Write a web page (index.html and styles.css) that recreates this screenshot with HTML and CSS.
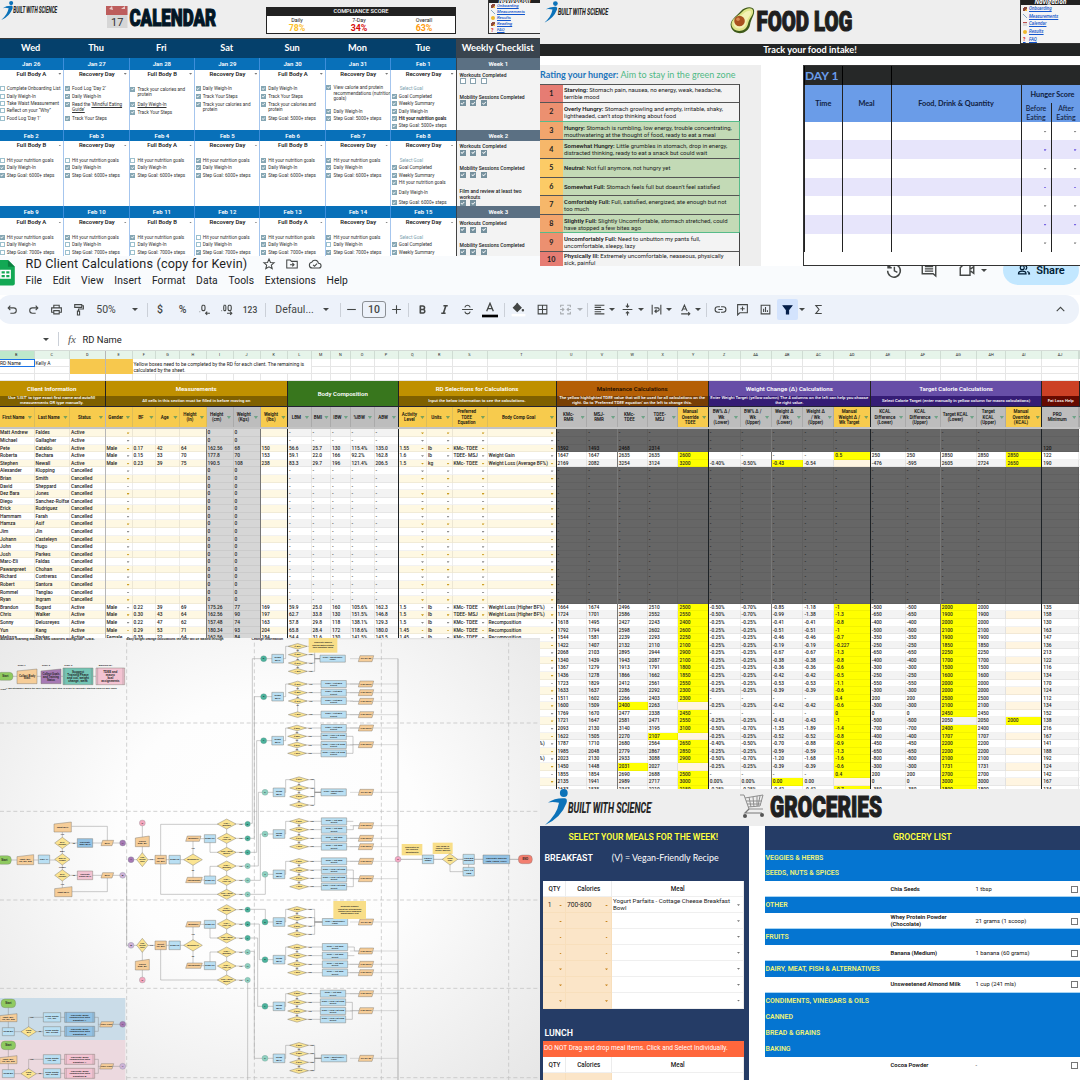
FILE: index.html
```html
<!DOCTYPE html>
<html lang="en">
<head>
<meta charset="utf-8">
<title>Built With Science</title>
<link rel="stylesheet" href="styles.css">
</head>
<body>
<svg class="defs" width="0" height="0">
  <symbol id="logo" viewBox="0 0 109 36">
    <circle cx="18.8" cy="4" r="3.9" fill="#0b72b9"/>
    <path d="M3 13.5Q10 8.600 20 9.200Q22.800 9.800 21.500 14Q16 29 0 36Q12 26 14 13.800Q8 12.300 3 13.500Z" fill="#0b72b9"/>
    <text x="23" y="23.500" class="logo-text" textLength="83" lengthAdjust="spacingAndGlyphs">BUILT WITH SCIENCE</text>
    <text x="105.800" y="16" font-size="3.500">™</text>
  </symbol>
</svg>
<main class="collage">
  <section class="calendar">
    <header class="cal-top">
      <svg class="logo-sm"><use href="#logo"/></svg>
      <svg class="cal-title" viewBox="0 0 112 24">
        <rect x="1" y="0" width="20.500" height="22" fill="#d6d6d6"/>
        <path d="M0 0h21.500v9H0z" fill="#bd5d5c"/>
        <path d="M3 3l3-3 1 4zM15 3l4-3v3z" fill="#e9c9c8"/>
        <text x="11.200" y="19.500" class="date-num">17</text>
        <text x="23.500" y="20" class="poster" font-size="24" fill="#031625" stroke="#031625" textLength="86.500" lengthAdjust="spacingAndGlyphs">CALENDAR</text>
      </svg>
      <div class="score">
        <div class="score-head">COMPLIANCE SCORE</div>
        <div class="score-row">
          <div>Daily<b class="c-y">78%</b></div>
          <div>7-Day<b class="c-r">34%</b></div>
          <div>Overall<b class="c-o">63%</b></div>
        </div>
      </div>
      <nav class="nav nav-cal"><h4>Navigation</h4><a><i class="rocket"></i>Onboarding</a><a><i class="tool"></i>Measurements</a><a><i class="medal"></i>Results</a><a><i class="rocket"></i>Reading</a><a><i class="q">?</i>FAQ</a></nav>
    </header>
    <div class="cal-grid" id="cal"></div>
  </section>

  <section class="sheet">
    <header class="s-title">
      <svg class="s-logo" viewBox="0 0 20 26"><path d="M0 2Q0 0 2 0H13L20 7V24Q20 26 18 26H2Q0 26 0 24Z" fill="#12a854"/><path d="M13 0L20 7H13Z" fill="#0b8040"/><path d="M5 10h11v9H5zM6.500 11.500v2.300h3.300v-2.300zm4.800 0v2.300h3.200v-2.300zM6.500 15.200v2.300h3.300v-2.300zm4.800 0v2.300h3.200v-2.300z" fill="#fff" fill-rule="evenodd"/></svg>
      <div class="s-names">
        <div class="s-doc"><span>RD Client Calculations (copy for Kevin)</span>
          <svg class="ic" viewBox="0 0 24 24"><path d="M12 3.500l2.500 5.800 6.300.5-4.800 4.100 1.500 6.200L12 16.800l-5.500 3.300L8 13.900 3.200 9.800l6.300-.5z"/></svg>
          <svg class="ic" viewBox="0 0 24 24"><path d="M3 19V5h6l2 2.500h10V19zM8.500 13.200H15M12.500 10.200l3 3-3 3"/></svg>
          <svg class="ic" viewBox="0 0 24 24"><path d="M7 19a5 5 0 0 1-.6-9.900 6 6 0 0 1 11.400 1.500A4.200 4.200 0 0 1 18.500 19zM8.700 13.500l2.500 2.300 4.300-4.300"/></svg>
        </div>
        <div class="s-menu"><span>File</span><span>Edit</span><span>View</span><span>Insert</span><span>Format</span><span>Data</span><span>Tools</span><span>Extensions</span><span>Help</span></div>
      </div>
      <div class="s-right">
        <svg class="big" viewBox="0 0 24 24"><path d="M4 4v5h5M4.500 9A8.500 8.500 0 1 1 3.500 13M12.500 7.500V13l4 2.300"/></svg>
        <svg class="big" viewBox="0 0 24 24"><path d="M3 4h18v16l-3.500-3H3zM6.500 7.500h11M6.500 10.500h11M6.500 13.500h11"/></svg>
        <svg class="big" viewBox="0 0 24 24"><path d="M3 9l4-4h9v14H3zM17 10.500l4-3v9l-4-3"/></svg>
        <i class="tri"></i>
        <div class="share"><svg viewBox="0 0 24 24"><circle cx="9" cy="8" r="3.400"/><path d="M2.500 18.500q0-4.500 6.500-4.500t6.500 4.500zM14.500 5a3.300 3.300 0 0 1 0 6.300M17.500 14.500q4 1 4 4H19"/></svg>Share</div>
      </div>
    </header>
    <div class="toolbar" id="toolbar"></div>
    <div class="formula"><span class="ref">1</span><i class="tri"></i><i class="sep"></i><em>fx</em><span>RD Name</span></div>
    <div class="cols letters" id="letters"></div>
    <div class="cols intro" id="intro"></div>
    <div class="cols groups">
      <div class="g gold" style="grid-column:1/4">Client Information<small>Use ‘LIST’ to type exact first name and autofill measurements OR type manually.</small></div>
      <div class="g gold" style="grid-column:4/11">Measurements<small>All cells in this section must be filled in before moving on</small></div>
      <div class="g green" style="grid-column:11/16">Body Composition</div>
      <div class="g gold" style="grid-column:16/20">RD Selections for Calculations<small>Input the below information to see the calculations.</small></div>
      <div class="g orange" style="grid-column:20/25">Maintenance Calculations<small>The yellow highlighted TDEE value that will be used for all calculations on the right. Go to ‘Preferred TDEE equation’ on the left to change this.</small></div>
      <div class="g violet" style="grid-column:25/30">Weight Change (Δ) Calculations<small>Enter Weight Target (yellow column) The 4 columns on the left can help you choose the right value.</small></div>
      <div class="g violet" style="grid-column:30/35">Target Calorie Calculations<small>Select Calorie Target (enter manually in yellow column for macro calculations)</small></div>
      <div class="g red" style="grid-column:35/37"><small>Fat Loss Help</small></div>
    </div>
    <div class="cols heads" id="heads"></div>
    <div class="cols body" id="body"></div>
  </section>

  <section class="food">
    <header class="food-top">
      <svg class="logo-md"><use href="#logo"/></svg>
      <svg class="food-title" viewBox="0 0 124 28">
        <path d="M2 20C0 13 7 10 12 4C16-.5 24-1 25 3C26 8 22 11 21 18C19 28 5 29 2 20Z" fill="#3f5a1a"/>
        <path d="M2.500 18C2 12 8 10 13 5C17 1 23 0 24 3.500C25 8 20 11 19 17C17 26 4 26 2.500 18Z" fill="#dfe68a"/>
        <path d="M4.500 17C4 12 10 11 14 7C18 3 22 3 22 5C22 9 18 11 17 17C15 23 5.500 23 4.500 17Z" fill="#f3f2b4"/>
        <circle cx="10.500" cy="14" r="5.300" fill="#a9521f"/><circle cx="9" cy="12.200" r="1.800" fill="#d98a52"/>
        <text x="27.500" y="24" class="poster" font-size="28.500" fill="#1f1f1f" stroke="#1f1f1f" textLength="96" lengthAdjust="spacingAndGlyphs">FOOD LOG</text>
      </svg>
      <nav class="nav nav-food"><h4>Navigation</h4><a><i class="rocket"></i>Onboarding</a><a><i class="tool"></i>Measurements</a><a><i class="cal"></i>Calendar</a><a><i class="medal"></i>Results</a><a><i class="q">?</i>FAQ</a></nav>
    </header>
    <div class="banner">Track your food intake!</div>
    <div class="food-main">
      <div class="hunger">
        <h3><b>Rating your hunger:</b> Aim to stay in the green zone</h3>
        <div id="hunger"></div>
      </div>
      <div class="day" id="day"></div>
    </div>
  </section>

  <section class="flow" id="flow"></section>

  <section class="groc">
    <header class="groc-top">
      <svg class="logo-lg"><use href="#logo"/></svg>
      <svg class="groc-title" viewBox="0 0 144 28">
        <path d="M1 3h4l5 14h14M6 6l18-3-3 11-12 1M10 5l2 10M14 5l1 10M18 4v10M21 4l-2 10M7 9h16M8 12h14" fill="none" stroke="#8e8e8e" stroke-width="1"/>
        <path d="M10 17l-4 4h17" fill="none" stroke="#777" stroke-width="1.200"/>
        <circle cx="6" cy="24" r="2" fill="#555"/><circle cx="23" cy="23" r="2" fill="#555"/>
        <text x="31" y="24.500" class="poster" font-size="30" fill="#1f1f1f" stroke="#1f1f1f" textLength="112" lengthAdjust="spacingAndGlyphs">GROCERIES</text>
      </svg>
    </header>
    <div class="groc-main">
      <div class="meals">
        <h2>SELECT YOUR MEALS FOR THE WEEK!</h2>
        <div class="meal-h"><b>BREAKFAST</b><span>(V) = Vegan-Friendly Recipe</span></div>
        <div class="mt" id="breakfast"></div>
        <div class="lunch">LUNCH</div>
        <div class="warn">DO NOT Drag and drop meal items. Click and Select Individually.</div>
        <div class="mt" id="lunch"></div>
      </div>
      <div class="list"><h2>GROCERY LIST</h2><div id="list"></div></div>
    </div>
  </section>
</main>
<script src="app.js"></script>
</body>
</html>
```
FILE: styles.css
```css
*{box-sizing:border-box}
body{margin:0;background:#fff;font-family:Roboto,"Liberation Sans",sans-serif;color:#222}
h2,h3,h4{margin:0}
.defs{position:absolute}
.collage{width:1080px;height:1080px;overflow:hidden;display:grid;grid-template-columns:540px 540px;grid-template-rows:256px 10px 372px 151px 291px}
.collage>section{overflow:hidden;min-width:0;min-height:0}
.calendar{grid-area:1/1/2/2}
.sheet{grid-area:2/1/5/3}
.food{grid-area:1/2/3/3;z-index:1}
.flow{grid-area:4/1/6/2;z-index:1}
.groc{grid-area:5/2/6/3;z-index:1}
.logo-text{font:italic 700 15.5px Roboto,sans-serif;fill:#222;stroke:#222;stroke-width:.2}
.poster{font-family:Roboto,sans-serif;font-weight:900;stroke-width:1.2}
.date-num{font:11px Roboto,sans-serif;text-anchor:middle;fill:#333}

/* calendar */
.calendar{background:#fff;display:flex;flex-direction:column}
.cal-top{height:39px;flex:none;background:#eee;border-bottom:1px solid #3a3a3a;display:flex;align-items:flex-start}
.logo-sm{width:58px;height:19px;margin:1px 0 0 1px}
.cal-title{width:112px;height:24px;margin:6px 0 0 46.500px;overflow:visible}
.score{width:190px;height:27px;margin:7px 0 0 48.500px;background:#fff;border:1px solid #222;border-top:0}
.score-head{background:#222;color:#fff;font-weight:500;font-size:5.700px;line-height:8.500px;text-align:center;margin:0 -1px}
.score-row{display:grid;grid-template-columns:60px 64px 66px;text-align:center;font-size:5.400px;line-height:8px}
.score-row b{display:block;font-size:8.800px;line-height:9px}
.c-y{color:#fcc02c}.c-r{color:#d60b0b}.c-o{color:#ff9a0b}
.nav{background:#f4f4f4;border:1px solid #333;border-top:0;display:flex;flex-direction:column;overflow:hidden}
.nav h4{background:#222;color:#fff;text-align:center;font:italic 700 6.200px "Open Sans",sans-serif;line-height:4px;height:5px;flex:none}
.nav a{color:#1155cc;text-decoration:underline;font-style:italic;font-weight:500;display:flex;align-items:center}
.nav i{width:4px;height:4px;margin-right:2px;display:inline-block;font-style:normal;font-weight:900;line-height:4px}
.nav .rocket{background:linear-gradient(135deg,transparent 25%,#8c4a3e 25% 70%,#f2b23a 70%)}
.nav .tool{background:linear-gradient(45deg,transparent 42%,#88a6c0 42% 60%,transparent 60%)}
.nav .medal{background:#f0b92e;border-radius:50%}
.nav .cal{background:#d9d9d9;border-top:1.500px solid #c0504d}
.nav .q{color:#e0342c;font-size:5px}
.nav-cal{width:52px;height:34px;margin-left:32px;border-right:0}
.nav-cal h4{height:2.500px;line-height:1px}
.nav-cal a{font-size:4.300px;height:6.300px;padding-left:2px}
.cal-grid{display:grid;grid-template-columns:repeat(7,65.360px) 84.500px;grid-template-rows:19px 11.500px 60px 11.500px 65px 12px 38px;margin-left:-2px;width:542px}
.dow{background:#05406b;color:#fff;font:700 9.200px/17.500px Lato,sans-serif;text-align:center}
.dow.wk{background:#39444f;font-size:9.400px}
.date{background:#0870b9;color:#fff;font-weight:600;font-size:6px;line-height:11.500px;text-align:center;border-left:1px solid #3d8edb}
.date.wk{background:#5b7083;border-left:1px solid #37434e}
.cell{border-left:1px solid #a6c6ee;padding-left:.5px;overflow:hidden}
.cell h4{font-size:5.900px;line-height:8.400px;font-weight:600;text-align:center;display:flex;justify-content:center;height:15.500px;position:relative}
.cell h4::after{content:"";position:absolute;right:2px;top:3.500px;width:3px;height:1.700px;background:#777;clip-path:polygon(0 0,100% 0,50% 100%)}
.task{display:flex;align-items:center;font-size:4.650px;line-height:5.500px;color:#333;white-space:pre}
.task.multi{align-items:flex-start;padding-top:1.600px}
.task.tri3{align-items:flex-start}
.task.strong{font-weight:600;color:#111}
.task.goal{color:#7ba0ad;padding-left:8px}
.task u{text-decoration:underline}
.ck{width:5px;height:5px;border:.8px solid #9cc0cd;flex:none;margin-right:2.200px;background:#fff}
.ck.on{background:#85a6b3;border:0}
.ck.on::after{content:"";display:block;width:100%;height:100%;background:#fff;clip-path:polygon(18% 50%,28% 41%,43% 56%,74% 23%,84% 32%,43% 74%)}
.wkcell{background:#f3f3f3;border-left:1px solid #444;padding:2px 0 0 3px;font-size:5px;font-weight:500;line-height:6px;overflow:hidden}
.wkcell div{height:22.400px}
.wkcell p{margin:0;display:flex;gap:4.800px;padding-top:.5px}
.wkcell .ck{width:6px;height:6px;margin:0;border-color:#88a1ae}
.wkcell .ck.on{background:#75909d}

/* food log */
.food{background:#fff;display:flex;flex-direction:column}
.food-top{height:44px;flex:none;background:#eee;display:flex;align-items:flex-start}
.logo-md{width:66px;height:22px;margin:1px 0 0 3.500px}
.food-title{width:124px;height:28px;margin:7px 0 0 119.500px;overflow:visible}
.nav-food{width:60px;height:44px;margin-left:auto;border-right:0}
.nav-food a{font-size:4.500px;height:7.800px;padding-left:2px}
.banner{height:12px;flex:none;background:#232525;color:#fff;font:700 9.200px/12px Lato,sans-serif;text-align:center;margin-bottom:9px}
.food-main{display:flex;gap:42px}
.hunger{width:221px;height:201px;background:#eee;flex:none;overflow:hidden}
.hunger h3{font:400 9px/18.600px Lato,sans-serif;color:#4fb985;white-space:nowrap;height:18.500px;padding-top:1px}
.hunger h3 b{color:#1c74bb}
.hrow{display:flex;width:200px;height:18.620px;border-top:1px solid #555;border-right:1px solid #444;font-size:5.950px;line-height:7px;background:#f3f3f3}
.hrow .n{width:22.500px;display:flex;align-items:center;justify-content:center;font:700 7.200px Lato,sans-serif;flex:none}
.hrow p{margin:0;align-self:center;padding-left:1.500px;white-space:pre}
.hrow p b{font-weight:600}
.hrow.ok{background:#c3dab6;border-right-color:#57bb8a}
.hrow.edge{border-top-color:#57bb8a}
.hrow:last-child{height:15.500px}
.day{width:280px;flex:none;display:grid;grid-template-columns:37.500px 49px 130px 30px 33px;grid-template-rows:19px 18.300px 18.500px repeat(7,18.640px);border:1px solid #333;font:700 7.300px Lato,sans-serif;color:#102040}
.day>div{display:flex;align-items:center;justify-content:center;text-align:center;border-left:1px solid #222}
.day .blk{background:#262828;border-left-color:#000}
.day .blk.name{color:#6a9ceb;font-size:12px;padding-right:3px}
.day .hd{background:#6a9ce8}
.day .hd.light{font-weight:500;font-size:7px;line-height:8.500px}
.day .pick{justify-content:flex-end;padding-right:4px}
.day .pick.last{padding-right:7px}
.day .hd.light+.hd.light{padding-right:3px}
.day .lil{background:#e7e5fb}
.pick::after{content:"";width:3px;height:1.800px;background:#777;clip-path:polygon(0 0,100% 0,50% 100%);margin-top:1px;flex:none}
.day .lil.pick::after{background:#6a55e0}

/* spreadsheet */
.sheet{background:#fff}
.s-title{height:39px;background:#f9fbfd;display:flex}
.s-logo{width:20px;height:25.500px;margin:4px 0 0 -5px;flex:none}
.s-names{margin-left:10.500px}
.s-doc{display:flex;align-items:center;font-size:12.600px;line-height:15px;letter-spacing:.18px;color:#1f1f1f;gap:9px;white-space:nowrap}
.s-doc span{margin-right:5px;width:222px}
.ic{width:14px;height:14px;fill:none;stroke:#444746;stroke-width:1.800}
.s-menu{display:flex;gap:10.600px;font-size:10.300px;letter-spacing:.1px;line-height:20px;color:#202124}
.s-right{margin-left:auto;display:flex;align-items:center;height:28px;margin-right:1px}
.big{width:18px;height:18px;fill:none;stroke:#444746;stroke-width:1.900;margin-right:17px}
.big+.big+.big{margin-right:5px;margin-left:3px}
.tri{display:inline-block;border:3px solid transparent;border-top:3.500px solid #444746;border-bottom:0}
.share{background:#c2e7ff;width:76px;height:30px;border-radius:15px;margin-left:16px;display:flex;align-items:center;justify-content:center;gap:5px;font-size:11px;font-weight:600;color:#001d35}
.share svg{width:14px;height:14px;fill:none;stroke:#001d35;stroke-width:2}
.toolbar{height:29px;background:#edf2fa;border-radius:14px;margin:0 1px 0 -3px;display:flex;align-items:center;font-size:10.500px;color:#444746;font-weight:500}
.toolbar>span{display:flex;justify-content:center;align-items:center;flex:none;white-space:nowrap}
.toolbar svg{width:13px;height:13px;fill:none;stroke:#444746;stroke-width:2;flex:none}
.toolbar .sep,.formula .sep{width:1px;height:14px;background:#cbd0d8}
.toolbar .ten{height:17px;border:1px solid #8b8f94;border-radius:3px}
.toolbar .flt{height:21px;background:#d3e3fd;border-radius:2px}
.toolbar .flt svg{fill:#041e49;stroke:#041e49}
.toolbar .dim{opacity:.4}
.toolbar .sml{font-size:8.500px}
.toolbar .bld svg{stroke-width:3}
.toolbar .tx{font-weight:400}
.formula{height:25.500px;display:flex;align-items:center;padding-top:5px;font-size:9.400px;background:#fff}
.formula .ref{width:6px;margin-left:-4px}
.formula .tri{margin-left:41px}
.formula .sep{margin-left:9px}
.formula em{font:italic 11px "Liberation Serif",serif;margin:0 6.500px 0 9px;color:#555}
.cols{display:grid;width:1081px;margin-left:-1px;grid-template-columns:35.500px 35.500px 35.500px 27px 23.500px 24px 26.500px 27px 27px 27.500px 23.500px 19.500px 19.500px 24px 24px 28.500px 25.500px 35px 69px 30.700px 30.500px 30.100px 30.600px 30.400px 31.800px 31.100px 31.800px 30.900px 36.500px 34.800px 35.200px 35.800px 29.800px 35.900px 36.500px 1.400px}
.cols>div{min-width:0;overflow:hidden}
.letters{height:9px;background:#e6f4ea;font-size:3.800px;line-height:8.500px;text-align:center;border-top:.8px solid #d5dbd7}
.letters>div{border-right:1px solid #cfdcd3}
.letters>div:first-child{background:#bfe8cb}
.intro{height:22.800px;grid-template-rows:8px 7.500px 7.300px;font-size:5px;line-height:8px;white-space:nowrap}
.intro>div{border-right:1px solid #e6e6e6;border-bottom:1px solid #e6e6e6;padding-left:1px}
.intro .sel{border:1px solid #1a73e8;padding:0;line-height:7px}
.intro .yel{background:#f7c84d;border-color:#f7c84d}
.intro .note{background:#fff;grid-area:1/5/3/12;line-height:6.200px;padding-top:2px;white-space:normal;padding-left:1px;font-size:4.950px}
.cols>.frz{border-right:1.800px solid #b7b7b7}
.groups{height:26.200px}
.g{color:#fff;font-weight:600;font-size:6.100px;line-height:15px;text-align:center;display:flex;flex-direction:column;white-space:nowrap;border-right:1px solid #222;border-bottom:1px solid #223}
.g small{flex:1;font-size:4.250px;line-height:4.900px;font-weight:500;display:flex;align-items:center;justify-content:center;white-space:normal;width:100%;text-align:center}
.gold{background:#bf9000}.gold small{background:#7f6000}
.green{background:#38761d;line-height:26px}
.orange{background:#b45f06;color:#1c0d00}.orange small{background:#783f04;color:#fff}
.violet{background:#674ea7}.violet small{background:#351c75}
.red{background:#cc4125;padding-top:15px}.red small{background:#660a00}
.heads{height:20px;font-size:4.500px;font-weight:600;line-height:5.700px;text-align:center;color:#111}
.heads>div{background:#f7cb4d;display:flex;align-items:center;justify-content:center;border-right:.6px solid #ddbd58}
.heads>div span{flex:1;white-space:pre}
.heads>div::after{content:"";width:4.200px;height:3px;background:#7aa05a;clip-path:polygon(0 0,100% 0,50% 100%);margin-right:1.500px;flex:none}
.heads>.gr{background:#bdbdbd;border-right-color:#aaa}
.heads>.gr::after{background:#6fa387}
.body{border-top:2px solid #c4c4c4;grid-auto-rows:7.588px;font-size:4.850px;line-height:8px;font-weight:500;white-space:nowrap;color:#222}
.body>div{padding-left:1px;border-right:1px solid rgba(0,0,0,.07);box-shadow:inset 0 -1px rgba(0,0,0,.05)}
.body .cr{background:#fef8e3}
.body .lg{background:#f3f3f3}
.body .gy{background:#d6d6d6}
.body .dk{background:#666;color:#111}
.body .ye{background:#ff0}
.body .pa{background:#fff5e1}
.cols>.thick{border-right:1.600px solid #1d2226}
.body>.mid{border-right:1px solid #777}
.body .dd{display:flex;justify-content:space-between;align-items:flex-start}
.body .dd::after{content:"";width:3px;height:1.800px;background:#888;clip-path:polygon(0 0,100% 0,50% 100%);margin:3px 2px 0 auto;flex:none}
.body .dd.cr::after{background:#c99a1a}

/* flow chart */
.flow{background:radial-gradient(ellipse at 50% 45%,#fff 0%,#fdfdfd 40%,#e6e6e6 100%)}
.flow svg{display:block}
.flow text{font-family:"Liberation Sans",sans-serif;font-weight:700;text-anchor:middle;fill:#222}

/* groceries */
.groc{background:#fff}
.groc-top{height:36.500px;background:#eee;display:flex;align-items:flex-start}
.logo-lg{width:109px;height:36px;margin:0 0 0 4.500px;flex:none}
.groc-title{width:144px;height:28px;margin:3px 0 0 85px;flex:none;overflow:visible}
.groc-main{display:flex;gap:15.500px}
.meals{width:209px;height:255px;background:#253c66;padding:0 5.500px 0 3px;flex:none;color:#fff}
.groc h2{font:600 8.700px/23px Roboto,sans-serif;height:24px;color:#ffff3e;text-align:center;white-space:nowrap}
.meal-h{display:flex;height:31.700px;line-height:16px;gap:19px;padding-left:1.500px;font-weight:400;white-space:nowrap}
.meal-h span{font-family:Lato,sans-serif;font-size:8.900px}
.meal-h b,.lunch{font-weight:600;font-size:8.800px}
.mt{display:grid;grid-template-columns:22.500px 46px 1fr;grid-auto-rows:15.940px;color:#222;font-size:6.150px;line-height:7px;background:#fff}
.mt>div{display:flex;align-items:center;border-bottom:1px solid #efefef;border-right:1px solid #ececec;padding-left:1.500px}
.mt .h{justify-content:center;font:500 6.300px Roboto,sans-serif}
.mt .o{background:#fbe5c8;border-color:#f8dfbc}
.mt .pick{justify-content:space-between;padding-right:2.500px}
.mt .o.pick{font-size:6.700px;padding-top:1px}
.mt .o.pick::after{background:#c8841d}
.lunch{height:32.600px;line-height:49px;padding-left:1.500px}
.warn{background:#ff673c;height:15.500px;line-height:15.500px;font-size:6.500px;padding-left:1px;white-space:nowrap;margin-bottom:.3px}
.list{flex:1;background:#fff}
.list h2{background:#253c66}
.lrow{height:15.940px;display:grid;grid-template-columns:126px 85px 1fr 9px;align-items:center;font-size:5.850px;line-height:7px;color:#111;white-space:pre;padding-top:1px}
.lrow b{font-weight:600}
.lrow.cat{background:#0575d1;color:#eef37a;font-size:6.950px;font-weight:600;display:block;line-height:16.800px;padding:0 0 0 1px}
.lrow.end{border-bottom:1px solid #a8d4f2}
.sq{width:7px;height:7px;border:1px solid #777}
```
FILE: app.js
```js
const $ = id => document.getElementById(id);

/* ---------- calendar ---------- */
const std = g => c => [[7.5, c[0], 'Hit your nutrition goals'], [7.5, c[1], 'Daily Weigh-In'], [7.5, c[2], `Step Goal: ${g}+ steps`]];
const s6 = std(6000), s7 = std(7000);
const tc = 'Track your calories and\nprotein';
const FA = 'Full Body A', FB = 'Full Body B', RD = 'Recovery Day';
const weeks = [
  { dates: ['Jan 26', 'Jan 27', 'Jan 28', 'Jan 29', 'Jan 30', 'Jan 31', 'Feb 1'], days: [
    [FA, [[7.5, 0, 'Complete Onboarding List'], [7.5, 0, 'Daily Weigh-In'], [7.5, 0, 'Take Waist Measurement'], [6.5, 0, 'Reflect on your “Why”'], [9, 0, 'Food Log ‘Day 1’']]],
    [RD, [[7.5, 1, 'Food Log ‘Day 2’'], [7.5, 1, 'Daily Weigh-In'], [15, 1, 'Read the <u>‘Mindful Eating\nGuide’</u>'], [7.5, 1, 'Track Your Steps']]],
    [FB, [[15, 1, tc], [9.5, 1, '<u>Daily Weigh-In</u>'], [5.5, 1, 'Track Your Steps']]],
    [RD, [[7.5, 1, 'Daily Weigh-In'], [7.5, 1, 'Track Your Steps'], [15, 1, tc]]],
    [FA, [[7.5, 1, 'Daily Weigh-In'], [7.5, 1, 'Track Your Steps'], [15, 1, tc], [7.5, 1, 'Step Goal: 5000+ steps']]],
    [RD, [[22.5, 1, 'View calorie and protein\nrecommendations (nutrition\ngoals)'], [7.5, 1, 'Daily Weigh-In'], [7.5, 1, 'Step Goal: 5000+ steps']]],
    [RD, [[7.5, 2, 'Select Goal'], [7.5, 1, 'Goal Completed'], [7.5, 1, 'Weekly Summary'], [7.5, 1, 'Daily Weigh-In'], [7.5, 1, 'Hit your nutrition goals', 'strong'], [7, 1, 'Step Goal: 5000+ steps']]]],
    list: [['Workouts Completed', 0, 3], ['Mobility Sessions Completed', 1, 3]] },
  { dates: ['Feb 2', 'Feb 3', 'Feb 4', 'Feb 5', 'Feb 6', 'Feb 7', 'Feb 8'], days: [
    [FB, s6([0, 1, 1])], [RD, s6([0, 1, 1])], [FA, s6([0, 1, 1])], [RD, s6([1, 1, 1])], [FB, s6([1, 1, 1])], [RD, s6([1, 1, 1])],
    [RD, [[7.5, 2, 'Select Goal'], [7.5, 1, 'Goal Completed'], [7.5, 1, 'Weekly Summary'], [7.5, 1, 'Hit your nutrition goals'], [12.5, 1, 'Daily Weigh-In'], [7.5, 1, 'Step Goal: 6000+ steps']]]],
    list: [['Workouts Completed', 1, 3], ['Mobility Sessions Completed', 1, 3], ['Film and review at least two<br>workouts', 1, 2]] },
  { dates: ['Feb 9', 'Feb 10', 'Feb 11', 'Feb 12', 'Feb 13', 'Feb 14', 'Feb 15'], days: [
    [FA, s7([1, 0, 0])], [RD, s7([1, 0, 0])], [FB, s7([1, 0, 0])], [RD, s7([0, 0, 1])], [FA, s7([1, 1, 1])], [RD, s7([1, 0, 1])],
    [RD, [[7.5, 2, 'Select Goal'], [7.5, 1, 'Goal Completed'], [7.5, 1, 'Weekly Summary']]]],
    list: [['Workouts Completed', 1, 3], ['Mobility Sessions Completed', 1, 3]] }
];
const ck = on => `<i class="ck${on ? ' on' : ''}"></i>`;
const lineKind = t => ['', 'multi', 'tri3'][t.split('\n').length - 1];
let h = ['Wed', 'Thu', 'Fri', 'Sat', 'Sun', 'Mon', 'Tue'].map(d => `<div class="dow">${d}</div>`).join('') + '<div class="dow wk">Weekly Checklist</div>';
weeks.forEach((w, i) => {
  h += w.dates.map(d => `<div class="date">${d}</div>`).join('') + `<div class="date wk">Week ${i + 1}</div>`;
  w.days.forEach(([t, tasks]) => {
    h += `<div class="cell"><h4>${t}</h4>` + tasks.map(([hh, c, txt, k]) =>
      `<div class="task ${k || ''} ${lineKind(txt)} ${c === 2 ? 'goal' : ''}" style="height:${hh}px">${c === 2 ? '' : ck(c)}<span>${txt}</span></div>`).join('') + '</div>';
  });
  h += '<div class="wkcell">' + w.list.map(([t, c, n]) => `<div>${t}<p>${ck(c).repeat(n)}</p></div>`).join('') + '</div>';
});
$('cal').innerHTML = h;

/* ---------- food log ---------- */
const hunger = [
  ['#e67c73', 'Starving:', ' Stomach pain, nausea, no energy, weak, headache,\nterrible mood'],
  ['#ec9070', 'Overly Hungry:', ' Stomach growling and empty, irritable, shaky,\nlightheaded, can’t stop thinking about food'],
  ['#f2a56d', 'Hungry:', ' Stomach is rumbling, low energy, trouble concentrating,\nmouthwatering at the thought of food, ready to eat a meal'],
  ['#f6b76a', 'Somewhat Hungry:', ' Little grumbles in stomach, drop in energy,\ndistracted thinking, ready to eat a snack but could wait'],
  ['#fccb66', 'Neutral:', ' Not full anymore, not hungry yet'],
  ['#fccb66', 'Somewhat Full:', ' Stomach feels full but doesn’t feel satisfied'],
  ['#f6b76a', 'Comfortably Full:', ' Full, satisfied, energized, ate enough but not\ntoo much'],
  ['#f2a56d', 'Slightly Full:', ' Slightly Uncomfortable, stomach stretched, could\nhave stopped a few bites ago'],
  ['#ec9070', 'Uncomfortably Full:', ' Need to unbutton my pants full,\nuncomfortable, sleepy, lazy'],
  ['#e67c73', 'Physically Ill:', ' Extremely uncomfortable, neaseous, physically\nsick, painful']
];
$('hunger').innerHTML = hunger.map(([c, b, t], i) => `<div class="hrow ${i > 1 && i < 8 ? 'ok' : ''} ${i === 2 || i === 8 ? 'edge' : ''}"><span class="n" style="background:${c}">${i + 1}</span><p><b>${b}</b>${t}</p></div>`).join('');
h = '<div class="blk name">DAY 1</div><div class="blk"></div><div class="blk" style="grid-column:3/6"></div>';
h += ['Time', 'Meal', 'Food, Drink &amp; Quantity'].map(t => `<div class="hd" style="grid-row:2/4">${t}</div>`).join('');
h += '<div class="hd" style="grid-column:4/6">Hunger Score</div><div class="hd light">Before<br>Eating</div><div class="hd light">After<br>Eating</div>';
for (let r = 0; r < 7; r++) for (let c = 0; c < 5; c++) h += `<div class="${r % 2 ? 'lil' : ''} ${c > 2 ? 'pick' : ''} ${c === 4 ? 'last' : ''}"></div>`;
$('day').innerHTML = h;

/* ---------- toolbar: [centre, width, content, class] ---------- */
const svg = d => `<svg viewBox="0 0 24 24"><path d="${d}"/></svg>`;
const T = '<i class="tri"></i>';
const tools = [
  [12, 13, svg('M8 5L4 9l4 4M4 9h10a5 5 0 0 1 0 10H8')], [33.5, 13, svg('M16 5l4 4-4 4M20 9H10a5 5 0 0 0 0 10h6')],
  [56, 13, svg('M7 8V4h10v4M6 17H3V9h18v8h-3M7 14h10v6H7z')], [78, 13, svg('M5 3h13v5H5zM18 5h3v6h-9v4M10 15h4v7h-4z')],
  [106, 22, '50%', 'tx'], [135, 6, T], [147, 1, '', 'sep'], [160, 8, '$'], [182.5, 10, '%'],
  [204, 14, svg('M3 16h1M8 4h3q2 0 2 5t-2 5H9q-2 0-2-5t2-5M22 19h-8M17 16l-3 3 3 3')],
  [227, 14, svg('M1 14h1M5 4h3q1 0 1 5t-1 5H6q-1 0-1-5t1-5M14 4h3q2 0 2 5t-2 5h-2q-2 0-2-5t2-5M11 19h9M17 16l3 3-3 3')],
  [250, 16, '123', 'sml'], [265, 1, '', 'sep'], [294.5, 39, 'Defaul...', 'tx'], [326, 6, T], [340, 1, '', 'sep'],
  [351, 10, svg('M4 12h16')], [374, 24, '10', 'ten'], [396.5, 10, svg('M4 12h16M12 4v16')], [408.5, 1, '', 'sep'],
  [422, 12, svg('M8 5v14M7 5.500h5.500a3 3 0 0 1 0 6.500H8h5.500a3.300 3.300 0 0 1 0 6.500H7'), 'bld'], [444, 12, svg('M10 5h8M6 19h8M14.500 5l-4.500 14'), 'bld'],
  [467, 13, svg('M2 12h20M17 8q-1-4-5-4T7 8M7 16q1 4 5 4t5-4')], [489.5, 16, '<svg viewBox="0 0 24 24" style="width:16px;height:16px"><path d="M7 14L12 2l5 12M9 10h6"/><path d="M0 21h24" stroke="#000" stroke-width="4"/></svg>'],
  [504, 1, '', 'sep'], [518, 16, '<svg viewBox="0 0 24 24" style="width:15px;height:15px"><path d="M9 2l7 7-6 6-6-6 7-7M5 9h10l-5 6z" fill="#444746"/><circle cx="19" cy="13" r="1" /><path d="M1 21h22" stroke="#fff" stroke-width="4"/></svg>'],
  [542, 13, svg('M4 4h16v16H4zM12 4v16M4 12h16')], [565, 13, svg('M9 4H3v4M15 4h6v4M9 20H3v-4M15 20h6v-4M2 12h7M22 12h-7M6 9l3 3-3 3M18 9l-3 3 3 3'), 'dim'], [579.5, 6, T, 'dim'],
  [587, 1, '', 'sep'], [599, 13, svg('M3 4h18M3 8h12M3 12h18M3 16h12M3 20h18')], [612, 6, T],
  [627.5, 13, svg('M3 12h18M12 1v7M9 5l3 3 3-3M12 23v-7M9 19l3-3 3 3')], [640.5, 6, T],
  [656, 13, svg('M4 3v18M20 3v18M8 9h6a3 3 0 0 1 0 6H9M12 12l-3 3 3 3')], [669, 6, T],
  [685, 13, svg('M5 15L10 4l5 11M7 11h6M4 20h16M17 17l3 3-3 3')], [698, 6, T], [706.5, 1, '', 'sep'],
  [720, 13, svg('M11 7H7a5 5 0 0 0 0 10h4M13 7h4a5 5 0 0 1 0 10h-4M8 12h8')], [742.5, 13, svg('M3 3h18v15H7l-4 4zM12 6.500v8M8 10.500h8')],
  [765, 13, svg('M4 4h16v16H4zM8.500 16.500v-6M12 16.500V7.500M15.500 16.500v-3')], [787, 21, svg('M4 5h16l-6 8v7h-4v-7z'), 'flt'], [802, 6, T],
  [818, 12, svg('M18 4.500H7l6 7.500-6 7.500h11')], [1060, 12, svg('M5 15l7-7 7 7')]
];
let end = -3;
$('toolbar').innerHTML = tools.map(([c, w, t, k]) => { const m = c - w / 2 - end; end = c + w / 2; return `<span class="${k || ''}" style="width:${w}px;margin-left:${m}px">${t}</span>`; }).join('');

/* ---------- spreadsheet ---------- */
const letters = 'B C D E F G H I J K L M N O P Q R S T U V W X Y Z AA AB AC AD AE AF AG AH AI AJ'.split(' ');
const thick = new Set([9, 14, 18, 23, 28, 33]);
const edge = c => (c === 2 ? ' frz' : '') + (thick.has(c) ? ' thick' : '') + ([6, 8, 20, 25, 30].includes(c) ? ' mid' : '');
$('letters').innerHTML = letters.map((l, c) => `<div class="${c === 2 ? 'frz' : ''}">${l}</div>`).join('') + '<div></div>';
h = '';
for (let r = 1; r < 4; r++) for (let c = 0; c < 35; c++) {
  if (r < 3 && c > 3 && c < 11) continue;
  const k = (r === 1 && c === 0 ? 'sel ' : '') + (r < 3 && (c === 2 || c === 3) ? 'yel ' : '') + (c === 2 ? 'frz' : '');
  h += `<div class="${k}" style="grid-area:${r}/${c + 1}">${r === 1 ? (['RD Name', 'Kelly A'][c] || '') : ''}</div>`;
}
$('intro').innerHTML = h + '<div class="note">Yellow boxes need to be completed by the RD for each client. The remaining is calculated by the sheet.</div>';
const heads = ['First Name', 'Last Name', 'Status', 'Gender', 'BF', 'Age', 'Height\n(in)', 'Height\n(cm)', 'Weight\n(Kgs)', 'Weight\n(lbs)', 'LBM', 'BMI', 'IBW', '%IBW', 'ABW', 'Activity\nLevel', 'Units', 'Preferred\nTDEE\nEquation', 'Body Comp Goal',
  'KMc-\nRMR', 'MSJ-\nRMR', 'KMc-\nTDEE', 'TDEE-\nMSJ', 'Manual\nOverride\nTDEE', 'BW% Δ /\nWk\n(Lower)', 'BW% Δ /\nWk\n(Upper)', 'Weight Δ\n/ Wk\n(Lower)', 'Weight Δ\n/ Wk\n(Upper)', 'Manual\nWeight Δ /\nWk Target', 'KCAL\nDifference\n(Lower)', 'KCAL\nDifference\n(Upper)', 'Target KCAL\n(Lower)', 'Target\nKCAL\n(Upper)', 'Manual\nOverride\n(KCAL)', 'PRO\nMinimum'];
const grayHead = c => c === 7 || c === 8 || (c > 9 && c < 15) || (c > 18 && ![23, 28, 33].includes(c));
$('heads').innerHTML = heads.map((t, c) => `<div class="${grayHead(c) ? 'gr' : ''}${edge(c)}"><span>${t}</span></div>`).join('') + '<div class="gr"></div>';
const names = `Matt Andrew|Faldes|Active;Michael|Gallagher|Active;Pete|Cataldo|Active;Roberta|Bechara|Active;Stephen|Newall|Active;Alexander|Klopping;Brian|Smith;David|Sheppard;Dez Bara|Jones;Diego|Sanchez-Rolfsen;Erick|Rodriguez;Hammam|Farah;Hamza|Asif;Jim|Jin;Johann|Casteleyn;John|Hugo;Josh|Parkes;Marc-Eli|Faldas;Pawanpreet|Chohan;Richard|Contreras;Robert|Santora;Rommel|Tanglao;Ryan|Ingram;Brandon|Bogard|Active;Chris|Walker|Active;Sonny|Delosreyes|Active;Yun|Kang|Active;Melissa|Parker|Active`.split(';').map(s => s.split('|'));
const left = {
  3: 'Male|0.17|42|64|162.56|68|150|56.6|25.7|130|115.4%|135.0|1.55|lb|KMc- TDEE|',
  4: 'Male|0.15|33|70|177.8|70|153|59.1|22.0|166|92.2%|162.8|1.6|lb|TDEE- MSJ|Weight Gain',
  5: 'Male|0.23|39|75|190.5|108|238|83.3|29.7|196|121.4%|206.5|1.5|kg|KMc- TDEE|Weight Loss (Average BF%)',
  24: 'Male|0.22|39|69|175.26|77|169|59.9|25.0|160|105.6%|162.3|1.5|lb|KMc- TDEE|Weight Loss (Higher BF%)',
  25: 'Male|0.30|43|64|162.56|90|197|62.7|33.8|130|151.5%|146.8|1.5|lb|TDEE- MSJ|Weight Loss (Higher BF%)',
  26: 'Male|0.22|47|62|157.48|74|163|57.8|29.8|118|138.1%|129.3|1.5|lb|KMc- TDEE|Recomposition',
  27: 'Male|0.29|53|71|180.34|93|204|65.8|28.4|172|118.6%|180.0|1.45|lb|KMc- TDEE|Recomposition',
  28: 'Female|0.35|22|64|162.56|84|184|54.4|31.6|130|141.5%|143.5|1.45|lb|KMc- TDEE|Recomposition'
};
const dark = '-|-|-|-||-|-|-|-|-|-|-|-|-||';
const right = {
  3: '1592|1493|2468|2314||-|-|-|-|-|-|-|-|-||120',
  4: '1647|1647|2635|2635|2600||-|-|-|0.5|250|250|2850|2850|2850|122',
  5: '2169|2082|3254|3124|3200|-0.40%|-0.50%|-0.43!|-0.54||-476|-595|2605|2724|2650|190'
};
`1664|1674|2496|2510|2500|-0.50%|-0.70%|-0.85|-1.18|-1|-500|-500|2000|2000||135
1724|1701|2586|2552|2550|-0.50%|-0.70%|-0.99|-1.38|-1.3|-650|-650|1900|1900||158
1618|1495|2427|2243|2400|-0.25%|-0.25%|-0.41|-0.41|-0.8|-400|-400|2000|2000||130
1792|1794|2598|2602|2600|-0.25%|-0.25%|-0.51|-0.51|-1|-500|-500|2100|2100||163
1544|1581|2239|2293|2250|-0.25%|-0.25%|-0.46|-0.46|-0.7|-350|-350|1900|1900||147
1422|1407|2132|2110|2100|-0.25%|-0.25%|-0.19|-0.19|-0.227|-250|-250|1850|1850||136
2068|2103|2895|2944|2900|-0.25%|-0.25%|-0.67|-0.67|-1.3|-650|-650|2250|2250||213
1340|1439|1943|2087|2100|-0.25%|-0.25%|-0.38|-0.38|-0.8|-400|-400|1700|1700||122
1367|1279|1913|1791|1800|-0.25%|-0.25%|-0.36|-0.36|-0.6|-300|-300|1500|1500||116
1436|1278|1866|1662|1850|-0.25%|-0.25%|-0.42|-0.42|-0.5|-250|-250|1600|1600||134
1723|1829|2412|2561|2550|-0.25%|-0.25%|-0.53|-0.53|-1.1|-550|-550|2000|2000||170
1633|1637|2286|2292|2300|-0.25%|-0.25%|-0.39|-0.39|-0.6|-300|-300|2000|2000||124
1511|1602|2266|2403|2300|-|-|-|-|0.4|200|200|2500|2500||112
1600|1509|2400!|2263||-0.25%|-0.25%|-0.42|-0.42|-0.6|-300|-300|2100|2100||134
1769|1670|2477|2338|2450|-|-|-|-|0|0|0|2450|2450||152
1721|1647|2581|2471|2550|-0.25%|-0.25%|-0.43|-0.43|-1|-500|-500|2050|2050|2000|138
2093|2130|3140|3195|3100|-0.50%|-0.70%|-1.35|-1.89|-1.4|-700|-700|2400|2400||216
1622|1505|2270|2107!||-0.25%|-0.25%|-0.52|-0.52|-0.8|-400|-400|1707|1707||167
1787|1710|2680|2564|2650|-0.40%|-0.50%|-0.70|-0.88|-0.9|-450|-450|2200|2200||141
1985|2048|2779|2867|2850|-0.25%|-0.25%|-0.59|-0.59|-1.3|-650|-650|2200|2200||188
2023|2130|2933|3088|2900|-0.50%|-0.70%|-1.20|-1.68|-1.6|-800|-800|2100|2100||192
1450|1448|2031!|2027||-0.25%|-0.25%|-0.39|-0.39|-0.6|-300|-300|1731|1731||124
1855|1854|2690|2688|2500|-|-|-|-|0.4|200|200|2700|2700||142
2135|1941|2989|2717|3000|0.00%|0.00%|0.00!|0.00||0|0|3000|3000||167
1633|1535|2343|2210|2150|-0.25%|-0.25%|-0.42|-0.42|-0.7|-350|-350|1800|1800||134`.split('\n').forEach((s, i) => { right[24 + i] = s; });
h = '';
for (let r = 1; r <= 48; r++) {
  const n = names[r - 1] || ['', '', ''];
  const l = left[r] ? left[r].split('|') : ['', '', '', '', r < 24 ? '0' : '', r < 24 ? '0' : '', '', '-', '-', '-', '-', '-', '', '', '', r === 42 || r === 44 ? 'Weight Loss (Higher BF%)' : ''];
  const row = [n[0], n[1], n[2] || 'Cancelled', ...l, ...(right[r] || dark).split('|')];
  const isDark = r < 4 || (r > 5 && r < 24), odd = r % 2;
  for (let c = 0; c < 35; c++) {
    let t = row[c] || '', k;
    const hl = t.endsWith('!'); t = t.replace('!', '');
    if (c === 7 || c === 8) k = 'gy';
    else if (c < 10 || (c > 14 && c < 19)) k = odd ? 'cr' : '';
    else if (c < 15) k = odd ? 'lg' : '';
    else if (isDark) k = 'dk';
    else if (hl) k = 'ye';
    else if (c === 23 || c === 28 || c === 33) k = t ? 'ye' : (c === 33 && !odd ? '' : 'pa');
    else if (c === 31 && r > 23 && r !== 39) k = 'ye';
    else k = odd ? 'lg' : '';
    if (c === 3 || (c > 14 && c < 19)) k += ' dd';
    h += `<div class="${k}${edge(c)}">${t}</div>`;
  }
  h += '<div></div>';
}
$('body').innerHTML = h;

/* ---------- flow chart ---------- */
const O = '#f6cd98', B = '#b9dff3', B2 = '#92c2e5', P = '#f3c3d2', Y = '#fbe491', TE = '#4bb29c', TL = '#8ed0c0', PU = '#a679b4', PL = '#cdb2d7', G = '#8fca60';
let o = '';
const txt = (x, y, s, f = 7) => { const a = s.split('/'); return a.map((t, i) => `<text x="${x}" y="${y + f * .35 + (i - (a.length - 1) / 2) * f * 1.05}" font-size="${f}">${t}</text>`).join(''); };
const poly = (p, c) => `<polygon points="${p}" fill="${c}" stroke="#77736a" stroke-width="1.300"/>`;
const box = (x, y, w, hh, c, s = '', f) => { o += poly(`${x - w / 2},${y - hh / 2} ${x + w / 2},${y - hh / 2} ${x + w / 2},${y + hh / 2} ${x - w / 2},${y + hh / 2}`, c) + txt(x, y, s, f); };
const bars = (x, y, w, hh, c, s, f) => { box(x, y, w, hh, c, s, f); o += `<path d="M${x - w / 2 + 5} ${y - hh / 2}v${hh}M${x + w / 2 - 5} ${y - hh / 2}v${hh}" stroke="#777" fill="none"/>`; };
const trap = (x, y, w, hh, c, s, f) => { o += poly(`${x - w / 2},${y - hh / 2 + 6} ${x + w / 2},${y - hh / 2} ${x + w / 2},${y + hh / 2} ${x - w / 2},${y + hh / 2}`, c) + txt(x, y + 2, s, f); };
const para = (x, y, w, hh, s, f) => { o += poly(`${x - w / 2 + 5},${y - hh / 2} ${x + w / 2},${y - hh / 2} ${x + w / 2 - 5},${y + hh / 2} ${x - w / 2},${y + hh / 2}`, O) + txt(x, y, s, f); };
const dia = (x, y, w, hh, s, f) => { o += poly(`${x},${y - hh / 2} ${x + w / 2},${y} ${x},${y + hh / 2} ${x - w / 2},${y}`, Y) + txt(x, y, s, f || 6); };
const dot = (x, y, c, s = '', r = 9) => { o += `<circle cx="${x}" cy="${y}" r="${r}" fill="${c}" stroke="#6f8a84" stroke-width=".8"/>` + txt(x, y, s, 7); };
const pill = (x, y, w, hh, c, s) => { o += `<rect x="${x - w / 2}" y="${y - hh / 2}" width="${w}" height="${hh}" rx="${hh / 2.2}" fill="${c}" stroke="#777"/>` + txt(x, y, s, 8); };
const ln = (d, c = '#858585', w = 1.3) => { o += `<path d="${d}" fill="none" stroke="${c}" stroke-width="${w}"/>`; };

const dash = 'stroke="#c0c0c0" stroke-width="2.200" stroke-dasharray="12 8" fill="none"';
o += `<path ${dash} d="M380 0V1332M763 0V1332M1144 0V1332M1526 0V1332M0 261H1620M0 526H1620M0 792H1620M0 1057H1620M0 1325H1620"/>`;
o += '<rect x="0" y="1086" width="376" height="126" fill="#cadce8"/><rect x="0" y="1212" width="376" height="120" fill="#ecd9df"/>';
o += txt(140, 8, 'calculate starting macros and calories alongside TDEE.', 11) + txt(525, 8, 'daily weight change calculations the user will be walked through', 9.5) + txt(802, 8, 'Change Information', 10);
o += '<rect x="860" y="6" width="760" height="4" fill="#e4e4e4"/>';
ln('M36 121H374');
pill(16, 121, 46, 24, G, 'Start'); trap(81, 121, 60, 44, O, 'Collect Body/Stats', 8); trap(153, 121, 60, 44, PU, 'Collect Goals/and Training/Status', 8);
bars(234, 121, 90, 50, '#74c5b5', 'Suggest/Training Phase/and cut, weight/change, week', 9); bars(331, 121, 86, 50, P, 'TDEE and/macro/kcal/assignments', 9);
o += txt(65, 88, 'STEP 1', 7) + txt(138, 88, 'STEP 2', 7) + txt(205, 88, 'STEP 3', 7) + txt(318, 88, 'Backing up...', 7);
o += txt(184, 155, 'A questionnaire walks the user through each step in order to calculate starting calories and TDEE', 7.2) + txt(10, 161, 'result', 6);

ln('M25 672H210M187 573V767M187 621H368M187 718H368M215 571H322V621M215 767H322V718M368 718H380V928H393');
pill(13, 672, 42, 26, G, 'Start'); trap(76, 671, 50, 30, O, 'Input: BIO,/HR, WK, BW', 6.5); box(132, 670, 34, 26, B, 'Calc. LI');
dia(187, 670, 46, 34, 'Male or/Female'); dia(187, 621, 46, 34, 'BF%/Known?'); dia(187, 718, 46, 34, 'BF%/Known?');
trap(188, 573, 52, 30, O, 'Input BF%', 7); trap(190, 767, 52, 30, O, 'Input BF%', 7);
box(255, 621, 46, 26, B2, 'Calculate/male BF%'); box(255, 718, 46, 26, P, 'Calculate/female BF%', 6.5);
para(322, 621, 38, 16, 'BF%'); para(322, 718, 38, 16, 'BF%'); dot(368, 621, PU, 'A'); dot(368, 718, PL, 'B');
o += txt(222, 621, 'No', 6) + txt(222, 718, 'No', 6) + txt(187, 596, 'Yes', 6) + txt(187, 645, 'Male', 6) + txt(187, 694, 'Female', 6) + txt(187, 744, 'Yes', 6);

const half = (y0, top, c, k) => {
  ln(`M393 ${y0}H600M427 ${y0}V${top ? y0 + 104 : y0 - 110}M579 ${y0 - 63}V${y0 + 61}M579 ${y0 - 63}H630V${y0 - 22}H680M579 ${y0 + 61}H630V${y0 + 20}H680`);
  ln(top ? `M680 ${y0 + 104}H482V${y0}` : `M680 ${y0 - 106}H482V${y0 + 104}H680`);
  const ys = top ? [821, 864, 906, 948, 990, 1032] : [564, 607, 649, 690, 733, 775];
  ln(`M680 ${ys[0]}V${ys[2]}M680 ${ys[3]}V${ys[5]}`);
  dot(393, y0, c, k); dia(427, y0, 34, 42, 'Goal/Weight/loss?', 5.5); trap(427, top ? y0 + 58 : y0 - 55, 42, 32, O, 'Check/goal, BF', 7); dot(427, top ? y0 + 104 : y0 - 110, '#f4a8bf', 'C');
  box(482, y0, 34, 26, O, 'Select/TS, BIO'); box(524, y0, 34, 26, B, 'Read TS'); dia(579, y0, 56, 34, 'Beginner?', 7);
  para(580, y0 - 63, 46, 16, 'Beginner'); para(582, y0 + 61, 50, 16, 'Intermediate', 6.5); box(630, y0 - 63, 34, 24, B, 'Read KG'); box(630, y0 + 61, 34, 24, B, 'Read KG');
  o += txt(454, y0, 'Yes', 6) + txt(579, y0 - 33, 'Yes', 6) + txt(579, y0 + 33, 'No', 6);
  ys.forEach((y, i) => { ln(`M700 ${y}H743`); dia(680, y, 56, 30, ['Goal =/Maintain', 'Goal =/Lose Fat', 'Goal = Build/Muscle'][i % 3]); o += txt(722, y, 'Yes', 6); dot(743, y, i < 3 ? TE : TL, 'DEFGHJ'[i], 8); });
};
half(671, 0, PU, 'A'); half(928, 1, PL, 'B');
[[562, 757, 68], [607, 763, 182], [649, 770, 314], [690, 775, 469], [733, 781, 594], [775, 796, 715], [820, 796, 858], [864, 778, 971], [906, 773, 1111], [946, 763, 1267]].forEach(([a, x, b]) => ln(`M751 ${a}H${x}V${b}H790`, '#a8a8a8', 1.8));
ln('M743 1040V1332', '#a8a8a8', 1.8);

[[0, B2, PU], [126, P, PL]].forEach(([d, c, e]) => {
  const y = 1102 + d;
  ln(`M25 ${y}V${y + 85}H130M86 ${y + 85}V${y + 42}H295M130 ${y + 84}H295V${y + 42}M295 ${y + 63}H368`);
  pill(25, y, 44, 26, G, 'Start'); trap(25, y + 43, 52, 24, O, 'Input: BIO,/HR, WK, BW', 6.5); box(25, y + 85, 36, 24, B, 'Read BG'); dia(86, y + 85, 46, 30, 'Know/BF?');
  box(156, y + 42, 52, 28, B, 'Read inputs/HC, WC', 7); box(156, y + 84, 52, 28, B, 'Read inputs/WC, height', 7);
  bars(239, y + 42, 90, 30, c, 'Calculate Body/composition with/Equation A', 7.5); bars(239, y + 84, 90, 30, c, 'Calculate Body/composition with/Equation B', 7.5);
  para(320, y + 63, 42, 16, 'Store result', 6); dot(368, y + 63, e, 'A');
  o += txt(95, y + 42, 'Yes', 6) + txt(120, y + 85, 'No', 6);
});

/* right-hand phases, shifted by 750 units */
const R = 750;
const phases = [
  [41, 68, TE, 143, [31, 56, 81, 106], 248, [68], [68]], [41, 182, TE, 143, [144, 170, 195, 236], 251, 0, [144, 170, 196, 236]],
  [41, 314, TE, 141, [276, 301, 327, 352], 251, 0, [276, 326]], [45, 469, TL, 147, [431, 456, 482, 507], 251, [469], [469]],
  [45, 594, TL, 147, [556, 581, 607, 632], 252, 0, [569, 607, 632]], [45, 715, TL, 147, [676, 702, 727, 752], 252, 0, [676, 728]],
  [45, 858, TE, 141, [820, 845, 870, 895], 255, [858], [858]], [45, 971, TE, 141, [933, 959, 985, 1010], 255, 0, [945, 985, 1010]],
  [45, 1111, TE, 141, [1073, 1099, 1125, 1150], 249, 0, [1073, 1124]], [45, 1267, TL, 147, [1228, 1253, 1279, 1304], 252, [1267], [1267]]
];
ln(`M${R + 444} 68V1332`, '#a0a0a0', 2.5);
phases.forEach(([cx, y, c, dx, ys, bx, one, ps], i) => {
  ln(`M${R + cx} ${y}H${R + 107}V${ys[0]}H${R + dx}M${R + dx} ${ys[0]}V${ys[3]}`);
  ys.forEach(q => ln(one ? `M${R + dx} ${q}H${R + 194}V${y}H${R + bx}` : `M${R + dx} ${q}H${R + bx + 58}`));
  if (!one) ps.forEach(p => ln(`M${R + bx + 58} ${ys.reduce((a, q) => Math.abs(q - p) < Math.abs(a - p) ? q : a)}V${p}H${R + 348}`));
  if (!one && ps.length === 2) ln(`M${R + bx + 58} ${ys[1]}V${ys[3]}`);
  ps.forEach(p => ln(`M${R + 300} ${p}H${R + 444}`, '#ababab'));
  dot(R + cx, y, c, 'DEFGHJDEFG'[i]); box(R + cx + 42, y, 35, 26, B, 'Read/BF%', 7.5);
  ys.forEach((q, j) => { dia(R + dx, q, 56, 17, ['≤ 20%', '≤ 25%', '≤ 27%', '> 30%'][j], 6.5); o += txt(R + dx + 39, q, 'Yes', 6); if (j < 3) o += txt(R + dx, q + 13, 'No', 5.5); });
  (one || ys).forEach((q, j) => box(R + bx, q, 76, 21, B, one ? 'STEP = Maintenance/Phase' : j && i % 3 === 2 ? 'STEP = Lose Fat Slow/Deficit' : 'STEP = Cut Mod/Deficit', one ? 6 : 6.5));
  ps.forEach(p => para(R + 348, p, 46, 18, one ? '0% per wk' : '0.5% week', 6.5));
});
const note = (x, y, w, hh, s) => { o += `<rect x="${R + x - w / 2}" y="${y - hh / 2}" width="${w}" height="${hh}" fill="#f8de88"/>` + txt(R + x, y, s, 6.5); };
note(219, 27, 86, 46, 'Duplicate phases/Should Match Status/then maintain TDEE'); note(299, 822, 98, 54, 'Duplicate phases/repeat for intermediate/status check mapping/maintenance first');
ln(`M${R + 444} 670H${R + 826}`, '#888', 1.8); ln(`M${R + 600} 670V707H${R + 656}V670`);
note(486, 641, 62, 34, 'Duplicates of/the calories/adjustments'); note(578, 637, 60, 34, 'Use TDEE in/calorie check/before macros');
dot(R + 444, 670, '#f4a8c4', 'K'); box(R + 534, 670, 34, 26, B, 'Calorie/Intake'); dia(R + 600, 670, 46, 34, 'TDEE/low?'); box(R + 656, 670, 34, 30, B, 'Find BW/maintain'); box(R + 656, 707, 34, 26, B, 'PRO 1.2/LBM');
box(R + 739, 670, 80, 26, B2, 'Calculate macros/(fats, carbs, PRO)', 7.5); pill(R + 826, 670, 42, 26, '#f37f70', 'END');
$('flow').innerHTML = `<svg width="540" height="442" viewBox="0 6 1620 1326">${o}</svg>`;

/* ---------- groceries ---------- */
const mh = '<div class="h">QTY</div><div class="h">Calories</div><div class="h">Meal</div>';
h = mh + '<div class="o pick">&nbsp; 1</div><div class="o pick">700-800</div><div class="pick">Yogurt Parfaits - Cottage Cheese Breakfast<br>Bowl</div>';
for (let i = 0; i < 6; i++) h += '<div class="o pick"><s></s></div><div class="o pick"><s></s></div><div class="pick"><s></s></div>';
$('breakfast').innerHTML = h;
$('lunch').innerHTML = mh + '<div class="o"></div><div class="o"></div><div></div>';
const list = ['VEGGIES & HERBS', 'SEEDS, NUTS & SPICES', ['Chia Seeds', '1 tbsp'], 'OTHER', ['Whey Protein Powder\n(Chocolate)', '21 grams (1 scoop)'], 'FRUITS', ['Banana (Medium)', '1 banana (60 grams)'], 'DAIRY, MEAT, FISH & ALTERNATIVES', ['Unsweetened Almond Milk', '1 cup (241 mls)'], 'CONDIMENTS, VINEGARS & OILS', 'CANNED', 'BREAD & GRAINS', 'BAKING', ['Cocoa Powder', '-']];
$('list').innerHTML = list.map((r, i) => Array.isArray(r) ? `<div class="lrow ${i < 13 ? 'end' : ''}"><span></span><b>${r[0]}</b><span>${r[1]}</span><i class="sq"></i></div>` : `<div class="lrow cat">${r.replace('&', '&amp;')}</div>`).join('');
```
